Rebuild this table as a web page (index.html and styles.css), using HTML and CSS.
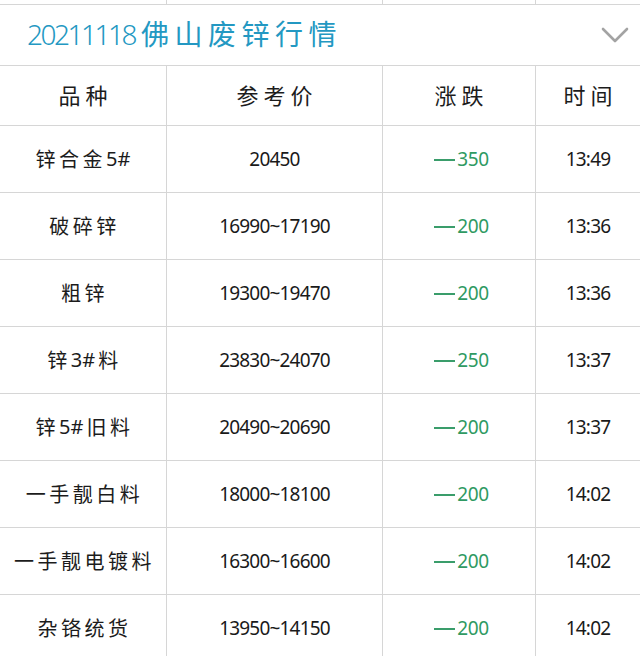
FILE: index.html
```html
<!DOCTYPE html>
<html lang="zh">
<head>
<meta charset="utf-8">
<link rel="stylesheet" href="styles.css">
</head>
<body>
<div class="page">
  <div class="strip">
    <div class="c"></div><div class="c"></div><div class="c"></div><div class="c last"></div>
  </div>
  <div class="title">
    <h1><span class="tnum">20211118</span>佛山废锌行情</h1>
    <svg class="chev" width="28" height="18" viewBox="0 0 28 18"><path d="M2 3 L14 15 L26 3" fill="none" stroke="#a3a3a3" stroke-width="2.6" stroke-linecap="round" stroke-linejoin="round"/></svg>
  </div>
  <div class="grid">
    <div class="h">品种</div><div class="h">参考价</div><div class="h">涨跌</div><div class="h last">时间</div>

    <div class="name">锌合金<span class="n">5#</span></div><div class="num">20450</div><div class="chg"><span class="dash"></span>350</div><div class="num last">13:49</div>
    <div class="name">破碎锌</div><div class="num">16990~17190</div><div class="chg"><span class="dash"></span>200</div><div class="num last">13:36</div>
    <div class="name">粗锌</div><div class="num">19300~19470</div><div class="chg"><span class="dash"></span>200</div><div class="num last">13:36</div>
    <div class="name">锌<span class="n">3#</span>料</div><div class="num">23830~24070</div><div class="chg"><span class="dash"></span>250</div><div class="num last">13:37</div>
    <div class="name">锌<span class="n">5#</span>旧料</div><div class="num">20490~20690</div><div class="chg"><span class="dash"></span>200</div><div class="num last">13:37</div>
    <div class="name">一手靓白料</div><div class="num">18000~18100</div><div class="chg"><span class="dash"></span>200</div><div class="num last">14:02</div>
    <div class="name">一手靓电镀料</div><div class="num">16300~16600</div><div class="chg"><span class="dash"></span>200</div><div class="num last">14:02</div>
    <div class="name">杂铬统货</div><div class="num">13950~14150</div><div class="chg"><span class="dash"></span>200</div><div class="num last">14:02</div>
  </div>
</div>
</body>
</html>
```

FILE: styles.css
```css
html, body {
  margin: 0;
  padding: 0;
  background: #ffffff;
}
.page {
  width: 640px;
  height: 656px;
  overflow: hidden;
  font-family: "Noto Sans CJK SC", "Noto Sans", sans-serif;
  color: #1c1c1c;
}
.strip {
  display: grid;
  grid-template-columns: 167px 216px 153px 104px;
  height: 4px;
  border-bottom: 1px solid #d6d6d6;
}
.strip .c {
  border-right: 1px solid #d6d6d6;
}
.strip .c.last {
  border-right: none;
}
.title {
  height: 60px;
  display: flex;
  align-items: center;
  justify-content: space-between;
  padding: 0 11px 0 27px;
  border-bottom: 1px solid #d6d6d6;
}
.title h1 {
  margin: 0;
  font-weight: 400;
  font-size: 28px;
  letter-spacing: 5.5px;
  color: #2398c2;
  line-height: 1;
  padding-bottom: 3px;
}
.title .tnum {
  font-family: "Noto Sans", sans-serif;
  font-weight: 300;
  font-size: 28px;
  letter-spacing: -2.5px;
  margin-right: 6px;
}
.chev {
  display: block;
}
.grid {
  display: grid;
  grid-template-columns: 167px 216px 153px 104px;
  grid-template-rows: 60px repeat(8, 67px);
}
.grid > div {
  display: flex;
  align-items: center;
  justify-content: center;
  border-right: 1px solid #d6d6d6;
  border-bottom: 1px solid #d6d6d6;
  box-sizing: border-box;
}
.grid > div.last {
  border-right: none;
}
.h {
  font-size: 22px;
  letter-spacing: 5px;
  padding-left: 5px;
  padding-bottom: 4px;
  font-weight: 400;
}
.name {
  font-size: 20px;
  letter-spacing: 3.5px;
  padding-left: 3px;
  padding-bottom: 2px;
}
.name .n {
  font-family: "Noto Sans", sans-serif;
  font-weight: 400;
  letter-spacing: 0;
  margin-right: 3px;
}
.num {
  font-family: "Noto Sans", sans-serif;
  font-weight: 400;
  font-size: 19px;
  letter-spacing: -0.8px;
  color: #1a1a1a;
}
.chg {
  font-family: "Noto Sans", sans-serif;
  font-weight: 400;
  font-size: 19px;
  letter-spacing: -0.4px;
  color: #2f9a62;
  padding-left: 5px;
}
.dash {
  display: inline-block;
  width: 21px;
  height: 2px;
  background: #3a9d6b;
  margin-right: 2px;
  margin-top: 1px;
}
```
